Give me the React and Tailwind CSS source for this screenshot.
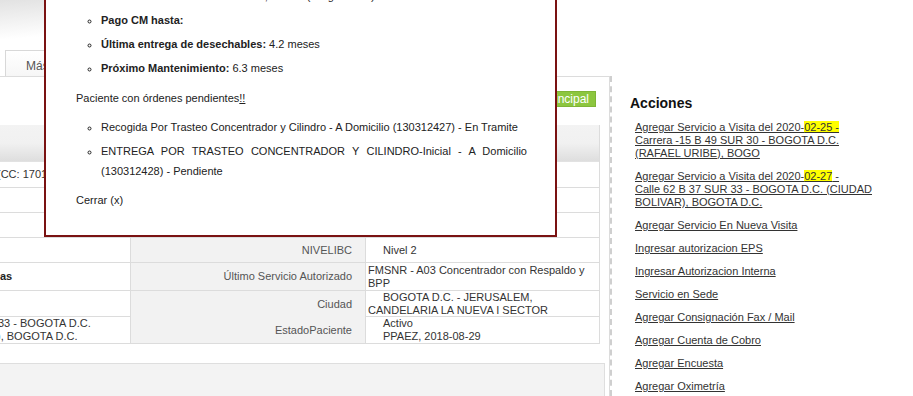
import React from 'react';

const rows = [
  { h: 'h-[26px]', left: <span className="-ml-[3px]">(CC: 1701234567) - Paciente</span>, label: '', value: null },
  { h: 'h-[25px]', left: '', label: '', value: null },
  { h: 'h-[25px]', left: '', label: '', value: null },
  { h: 'h-[25px]', left: '', label: 'NIVELIBC', value: <div className="pl-[15px]">Nivel 2</div> },
  {
    h: 'h-[28px]',
    left: <span className="font-bold text-[#222]">as</span>,
    label: 'Último Servicio Autorizado',
    value: (
      <div>
        FMSNR - A03 Concentrador con Respaldo y<br />BPP
      </div>
    ),
  },
  {
    h: 'h-[26px]',
    left: '',
    label: 'Ciudad',
    value: (
      <div>
        <span className="pl-[15px]">BOGOTA D.C. - JERUSALEM,</span>
        <br />
        CANDELARIA LA NUEVA I SECTOR
      </div>
    ),
  },
  {
    h: 'h-[27px]',
    left: (
      <div className="-ml-[2px]">
        33 - BOGOTA D.C.
        <br />
        <span className="-ml-[1px]">), BOGOTA D.C.</span>
      </div>
    ),
    label: 'EstadoPaciente',
    value: (
      <div className="pl-[15px]">
        Activo
        <br />
        PPAEZ, 2018-08-29
      </div>
    ),
  },
];

const links = [
  {
    key: 'v1',
    body: (
      <>
        Agregar Servicio a Visita del 2020-<span className="bg-[#ffff00]">02-25 -</span>
        <br />
        Carrera -15 B 49 SUR 30 - BOGOTA D.C.
        <br />
        (RAFAEL URIBE), BOGO
      </>
    ),
  },
  {
    key: 'v2',
    body: (
      <>
        Agregar Servicio a Visita del 2020-<span className="bg-[#ffff00]">02-27</span> -
        <br />
        Calle 62 B 37 SUR 33 - BOGOTA D.C. (CIUDAD
        <br />
        BOLIVAR), BOGOTA D.C.
      </>
    ),
  },
  { key: 'l3', body: 'Agregar Servicio En Nueva Visita' },
  { key: 'l4', body: 'Ingresar autorizacion EPS' },
  { key: 'l5', body: 'Ingresar Autorizacion Interna' },
  { key: 'l6', body: 'Servicio en Sede' },
  { key: 'l7', body: 'Agregar Consignación Fax / Mail' },
  { key: 'l8', body: 'Agregar Cuenta de Cobro' },
  { key: 'l9', body: 'Agregar Encuesta' },
  { key: 'l10', body: 'Agregar Oximetría' },
];

export default function App() {
  return (
    <div className="relative w-[913px] h-[396px] overflow-hidden bg-white font-['Liberation_Sans',Arial,sans-serif] text-[11px] text-[#333]">
      <div className="flex h-full">
        {/* contenido principal */}
        <div className="w-[610px] shrink-0 flex flex-col">
          <div className="h-[50px] shrink-0 bg-linear-to-br from-[#e2e2e2] via-white via-40% to-white" />
          <div className="h-[26px] shrink-0 flex pl-[5px]">
            <div className="w-[120px] border border-b-0 border-[#d8d8d8] bg-linear-to-b from-white to-[#f6f6f6] pl-[20px] pt-[6px] text-[12px] text-[#555]">
              Más
            </div>
          </div>
          <div className="shrink-0 border-t border-r border-[#dcdcdc] h-[400px]">
            <div className="h-[48px] flex justify-end pt-[14px] pr-[13px]">
              <div className="h-[16px] px-[6px] bg-[#8cc63f] border border-[#7fb436] text-white text-[12px] leading-[14px]">
                Dirección Principal
              </div>
            </div>
            <div className="w-[600px] border-r border-[#dcdcdc]">
              <div className="h-[37px] bg-linear-to-b from-[#f3f3f3] via-[#f1f1f1] to-[#dedede] border-b border-[#e2e2e2]" />
              {rows.map((r, i) => (
                <div key={i} className={`grid grid-cols-[131px_235px_234px] ${r.h} border-b border-[#dcdcdc]`}>
                  <div className="flex items-center border-r border-[#dcdcdc] leading-[13px] overflow-hidden whitespace-nowrap">
                    {r.left}
                  </div>
                  <div className="flex items-center justify-end pr-[13px] bg-[#f2f2f2] border-r border-[#dcdcdc] text-[#555]">
                    {r.label}
                  </div>
                  <div className="flex items-center pl-[2px] leading-[13px] text-[#333]">{r.value}</div>
                </div>
              ))}
            </div>
            <div className="mt-[19px] w-[605px] h-[40px] bg-[#f3f3f3] border-t border-r border-[#dedede]" />
          </div>
        </div>

        <div className="mt-[76px] w-[2px] border-l-2 border-dashed border-[#cfcfcf]" />

        {/* acciones */}
        <div className="pl-[18px] pt-[95px]">
          <h2 className="text-[14px] leading-[17px] font-bold text-[#111]">Acciones</h2>
          <div className="mt-[9px] pl-[5px] flex flex-col gap-[10px]">
            {links.map((l) => (
              <a key={l.key} className="underline leading-[13px] text-[#333] whitespace-nowrap">
                {l.body}
              </a>
            ))}
          </div>
        </div>
      </div>

      {/* ventana emergente */}
      <div className="absolute left-[44px] top-[-16px] w-[513px] h-[253px] border-2 border-[#7a1212] bg-white pl-[30px] pr-[28px] text-[#222]">
        <ul className="list-[circle] pl-[25px]">
          <li className="leading-[20px] mb-[4px]">
            <b>Fecha Última Visita:</b> 2020-01-08, Cra 15 (Programada)
          </li>
          <li className="leading-[20px] mb-[4px]">
            <b>Pago CM hasta:</b>
          </li>
          <li className="leading-[20px] mb-[4px]">
            <b>Última entrega de desechables:</b> 4.2 meses
          </li>
          <li className="leading-[20px] mb-[4px]">
            <b>Próximo Mantenimiento:</b> 6.3 meses
          </li>
        </ul>
        <p className="mt-[10px] leading-[20px]">
          Paciente con órdenes pendientes<span className="underline">!!</span>
        </p>
        <ul className="list-[circle] pl-[25px] mt-[9px] text-justify">
          <li className="leading-[20px] mb-[4px]">
            Recogida Por Trasteo Concentrador y Cilindro - A Domicilio (130312427) - En Tramite
          </li>
          <li className="leading-[20px]">
            ENTREGA POR TRASTEO CONCENTRADOR Y CILINDRO-Inicial - A Domicilio (130312428) - Pendiente
          </li>
        </ul>
        <p className="mt-[9px] leading-[20px]">Cerrar (x)</p>
      </div>
    </div>
  );
}
